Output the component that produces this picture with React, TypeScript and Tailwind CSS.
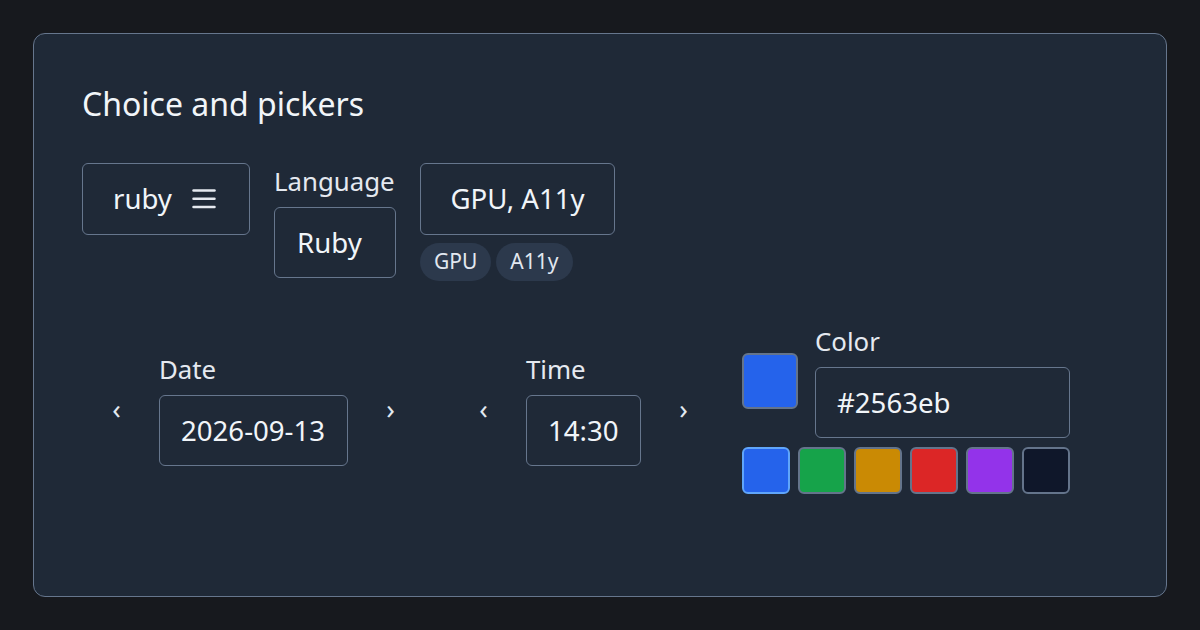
import React from "react";

const font = { fontFamily: '"Noto Sans", "Open Sans", sans-serif' };

function MenuIcon() {
  return (
    <svg width="24" height="24" viewBox="0 0 24 24" fill="none" stroke="#e5e9f0" strokeWidth="2.5" strokeLinecap="round">
      <line x1="1.5" y1="3.5" x2="22.5" y2="3.5" />
      <line x1="1.5" y1="11.8" x2="22.5" y2="11.8" />
      <line x1="1.5" y1="20" x2="22.5" y2="20" />
    </svg>
  );
}

function Chevron({ ch }: { ch: string }) {
  return (
    <button className="w-[69px] shrink-0 text-center text-[27.6px] leading-normal text-[#e2e8f0]">{ch}</button>
  );
}

function Field({ label, value, width }: { label: string; value: string; width: string }) {
  return (
    <div className="flex flex-col gap-2">
      <div className="text-[25.8px] leading-[36px] text-[#e5e9f0]">{label}</div>
      <div className={`${width} h-[71px] flex items-center rounded-md border border-[#66768d] px-[21px] text-[27.6px] text-[#f1f5f9]`}>
        {value}
      </div>
    </div>
  );
}

export default function App() {
  const swatches = ["#2563eb", "#16a34a", "#ca8a04", "#dc2626", "#9333ea", "#0f172a"];
  return (
    <div className="w-[1200px] h-[630px] bg-[#17191e] p-[33px]" style={font}>
      <div className="h-full rounded-xl border border-[#66768d] bg-[#1f2937] pl-[48px] pr-[48px] pt-[48px]">
        <h1 className="text-[32px] leading-[44px] text-[#f1f5f9] mb-[37px]">Choice and pickers</h1>

        <div className="flex items-start gap-6">
          <button className="w-[168px] h-[72px] flex items-center gap-[20px] rounded-md border border-[#66768d] pl-[30px] text-[27.6px] text-[#f1f5f9]">
            <span>ruby</span>
            <MenuIcon />
          </button>

          <div className="flex flex-col gap-2">
            <div className="text-[25.8px] leading-[36px] text-[#e5e9f0]">Language</div>
            <div className="w-[122px] h-[71px] flex items-center rounded-md border border-[#66768d] pl-[22px] text-[27.6px] text-[#f1f5f9]">
              Ruby
            </div>
          </div>

          <div className="flex flex-col gap-2">
            <button className="w-[195px] h-[72px] flex items-center justify-center rounded-md border border-[#66768d] text-[27.6px] text-[#f1f5f9]">
              GPU, A11y
            </button>
            <div className="flex gap-[5px]">
              <span className="h-[38px] flex items-center rounded-full bg-[#2c394c] px-[14px] text-[21px] text-[#e2e8f0]">GPU</span>
              <span className="h-[38px] flex items-center rounded-full bg-[#2c394c] px-[14px] text-[21px] text-[#e2e8f0]">A11y</span>
            </div>
          </div>
        </div>

        <div className="mt-[42px] flex items-center gap-6">
          <div className="flex items-center gap-2">
            <Chevron ch="‹" />
            <Field label="Date" value="2026-09-13" width="w-[189px]" />
            <Chevron ch="›" />
          </div>
          <div className="flex items-center gap-2">
            <Chevron ch="‹" />
            <Field label="Time" value="14:30" width="w-[115px]" />
            <Chevron ch="›" />
          </div>

          <div className="flex flex-col gap-[9px]">
            <div className="flex items-center gap-[17px]">
              <div className="w-[56px] h-[56px] rounded-md border-2 border-[#64748b] bg-[#2563eb]" />
              <Field label="Color" value="#2563eb" width="w-[255px]" />
            </div>
            <div className="flex gap-2">
              {swatches.map((c, i) => (
                <div
                  key={c}
                  className={`w-[48px] h-[47px] rounded-md border-2 ${i === 0 ? "border-[#60a5fa]" : "border-[#64748b]"}`}
                  style={{ backgroundColor: c }}
                />
              ))}
            </div>
          </div>
        </div>
      </div>
    </div>
  );
}
